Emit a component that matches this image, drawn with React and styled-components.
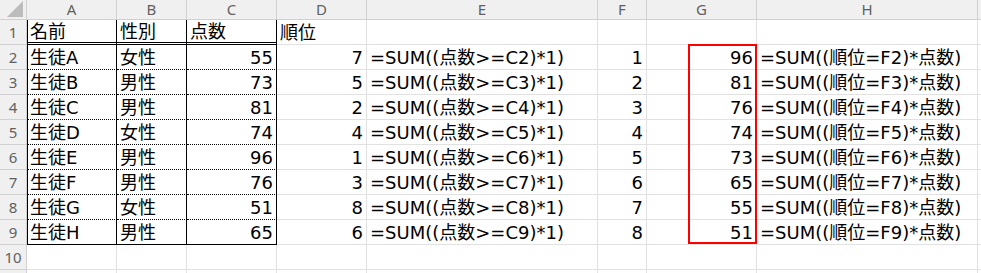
import React from "react";
import styled, { createGlobalStyle, css } from "styled-components";

const GlobalStyle = createGlobalStyle`
  html, body { margin: 0; padding: 0; background: #ffffff; }
`;

const GRID = "#e1e1e1";
const HEAD_LINE = "#d0d0d0";

const Sheet = styled.div`
  position: relative;
  width: 981px;
  height: 273px;
  overflow: hidden;
  display: grid;
  grid-template-columns: 27px 90px 70px 90px 90px 231px 49px 110px 221px 1fr;
  grid-template-rows: 20px repeat(11, 25px);
  font-family: "DejaVu Sans", "Noto Sans CJK JP", sans-serif;
  font-size: 18px;
  color: #000;
`;

const HeaderCell = styled.div`
  box-sizing: border-box;
  background: #f0f0f0;
  border-right: 1px solid ${HEAD_LINE};
  border-bottom: 1px solid ${HEAD_LINE};
  color: #616161;
  font-family: "Noto Sans", "Liberation Sans", sans-serif;
  font-size: 15px;
  display: flex;
  align-items: center;
  justify-content: center;
  line-height: 1;
  padding-top: ${(p) => (p.$row ? "1px" : "0")};
`;

const Corner = styled(HeaderCell)`
  position: relative;
  justify-content: flex-end;
  align-items: flex-end;
  padding: 0 3px 2px 0;
`;

const borderFor = (kind) => {
  switch (kind) {
    case "solid":
      return "1px solid #000";
    case "dotted":
      return "1px dotted #000";
    case "double":
      return "3px double #000";
    default:
      return `1px solid ${GRID}`;
  }
};

const Cell = styled.div`
  box-sizing: border-box;
  display: flex;
  align-items: center;
  justify-content: ${(p) => (p.$num ? "flex-end" : "flex-start")};
  padding: 1px 3px 0 3px;
  white-space: nowrap;
  line-height: 1;
  border-right: ${(p) => borderFor(p.$right)};
  border-bottom: ${(p) => borderFor(p.$bottom)};
  ${(p) =>
    p.$left &&
    css`
      border-left: ${borderFor(p.$left)};
      padding-left: 2px;
    `}
`;

const Highlight = styled.div`
  position: absolute;
  left: 688px;
  top: 44px;
  width: 69px;
  height: 200px;
  box-sizing: border-box;
  border: 2px solid #ff0000;
  pointer-events: none;
`;

const columns = ["A", "B", "C", "D", "E", "F", "G", "H", ""];

const rows = [
  ["生徒A", "女性", 55, 7, 1, 96],
  ["生徒B", "男性", 73, 5, 2, 81],
  ["生徒C", "男性", 81, 2, 3, 76],
  ["生徒D", "女性", 74, 4, 4, 74],
  ["生徒E", "男性", 96, 1, 5, 73],
  ["生徒F", "男性", 76, 3, 6, 65],
  ["生徒G", "女性", 51, 8, 7, 55],
  ["生徒H", "男性", 65, 6, 8, 51],
];

function CornerTriangle() {
  return (
    <svg width="16" height="16" viewBox="0 0 16 16">
      <polygon points="0,16 16,16 16,0" fill="#bcbcbc" />
    </svg>
  );
}

export default function App() {
  const cells = [];

  cells.push(
    <Corner key="corner">
      <CornerTriangle />
    </Corner>
  );
  columns.forEach((c, i) => cells.push(<HeaderCell key={"h" + i}>{c}</HeaderCell>));

  cells.push(<HeaderCell key="r1" $row>1</HeaderCell>);
  cells.push(<Cell key="1a" $left="solid" $right="solid" $bottom="double">名前</Cell>);
  cells.push(<Cell key="1b" $right="solid" $bottom="double">性別</Cell>);
  cells.push(<Cell key="1c" $right="solid" $bottom="double">点数</Cell>);
  cells.push(<Cell key="1d">順位</Cell>);
  ["e", "f", "g", "h", "i"].forEach((k) => cells.push(<Cell key={"1" + k} />));

  rows.forEach((r, i) => {
    const n = i + 2;
    const bottom = i === rows.length - 1 ? "solid" : "dotted";
    cells.push(<HeaderCell key={"r" + n} $row>{n}</HeaderCell>);
    cells.push(<Cell key={n + "a"} $left="solid" $right="solid" $bottom={bottom}>{r[0]}</Cell>);
    cells.push(<Cell key={n + "b"} $right="solid" $bottom={bottom}>{r[1]}</Cell>);
    cells.push(<Cell key={n + "c"} $num $right="solid" $bottom={bottom}>{r[2]}</Cell>);
    cells.push(<Cell key={n + "d"} $num>{r[3]}</Cell>);
    cells.push(<Cell key={n + "e"}>{`=SUM((点数>=C${n})*1)`}</Cell>);
    cells.push(<Cell key={n + "f"} $num>{r[4]}</Cell>);
    cells.push(<Cell key={n + "g"} $num>{r[5]}</Cell>);
    cells.push(<Cell key={n + "h"}>{`=SUM((順位=F${n})*点数)`}</Cell>);
    cells.push(<Cell key={n + "i"} />);
  });

  [10, 11].forEach((n) => {
    cells.push(<HeaderCell key={"r" + n} $row>{n === 10 ? n : ""}</HeaderCell>);
    columns.forEach((c, i) => cells.push(<Cell key={n + "-" + i} />));
  });

  return (
    <>
      <GlobalStyle />
      <Sheet>
        {cells}
        <Highlight />
      </Sheet>
    </>
  );
}
